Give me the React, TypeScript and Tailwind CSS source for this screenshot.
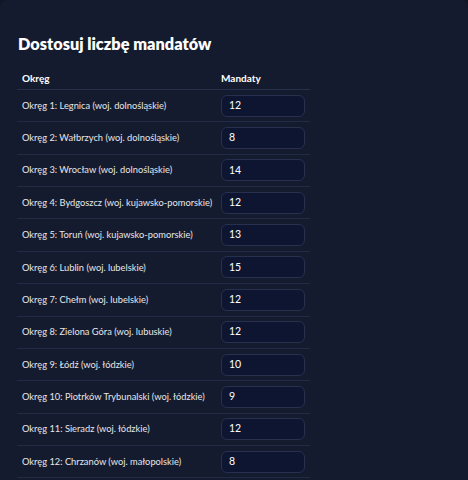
import React from "react";

const rows: [string, number][] = [
  ["Okręg 1: Legnica (woj. dolnośląskie)", 12],
  ["Okręg 2: Wałbrzych (woj. dolnośląskie)", 8],
  ["Okręg 3: Wrocław (woj. dolnośląskie)", 14],
  ["Okręg 4: Bydgoszcz (woj. kujawsko-pomorskie)", 12],
  ["Okręg 5: Toruń (woj. kujawsko-pomorskie)", 13],
  ["Okręg 6: Lublin (woj. lubelskie)", 15],
  ["Okręg 7: Chełm (woj. lubelskie)", 12],
  ["Okręg 8: Zielona Góra (woj. lubuskie)", 12],
  ["Okręg 9: Łódź (woj. łódzkie)", 10],
  ["Okręg 10: Piotrków Trybunalski (woj. łódzkie)", 9],
  ["Okręg 11: Sieradz (woj. łódzkie)", 12],
  ["Okręg 12: Chrzanów (woj. małopolskie)", 8],
];

export default function App() {
  return (
    <div
      className="w-[468px] h-[480px] overflow-hidden bg-[#111726]"
      style={{ fontFamily: 'Lato, "Noto Sans", sans-serif' }}
    >
      <div className="rounded-lg bg-[#151b2e] h-[600px] pt-[31px] pl-[17px] pr-[158px]">
        <h2 className="text-[16.3px] leading-[26px] font-extrabold text-white pl-px">
          Dostosuj liczbę mandatów
        </h2>
        <div className="mt-[14px]">
          <div className="flex h-[19px] items-start border-b border-[#27304b] text-[10px] leading-[14px] font-bold text-white">
            <div className="w-[204px] pl-[5px]">Okręg</div>
            <div>Mandaty</div>
          </div>
          {rows.map(([name, val]) => (
            <div
              key={name}
              className="flex h-[32.36px] items-center border-b border-[#222b45] text-[9.3px] text-[#e5e7eb] whitespace-nowrap"
            >
              <div className="w-[204px] pl-[5px]">{name}</div>
              <div className="w-[84px] h-[22px] rounded-[6px] border border-[#27304f] bg-[#0d1530] flex items-center pl-[7px] text-[10.5px] text-white">
                {val}
              </div>
            </div>
          ))}
        </div>
      </div>
    </div>
  );
}
